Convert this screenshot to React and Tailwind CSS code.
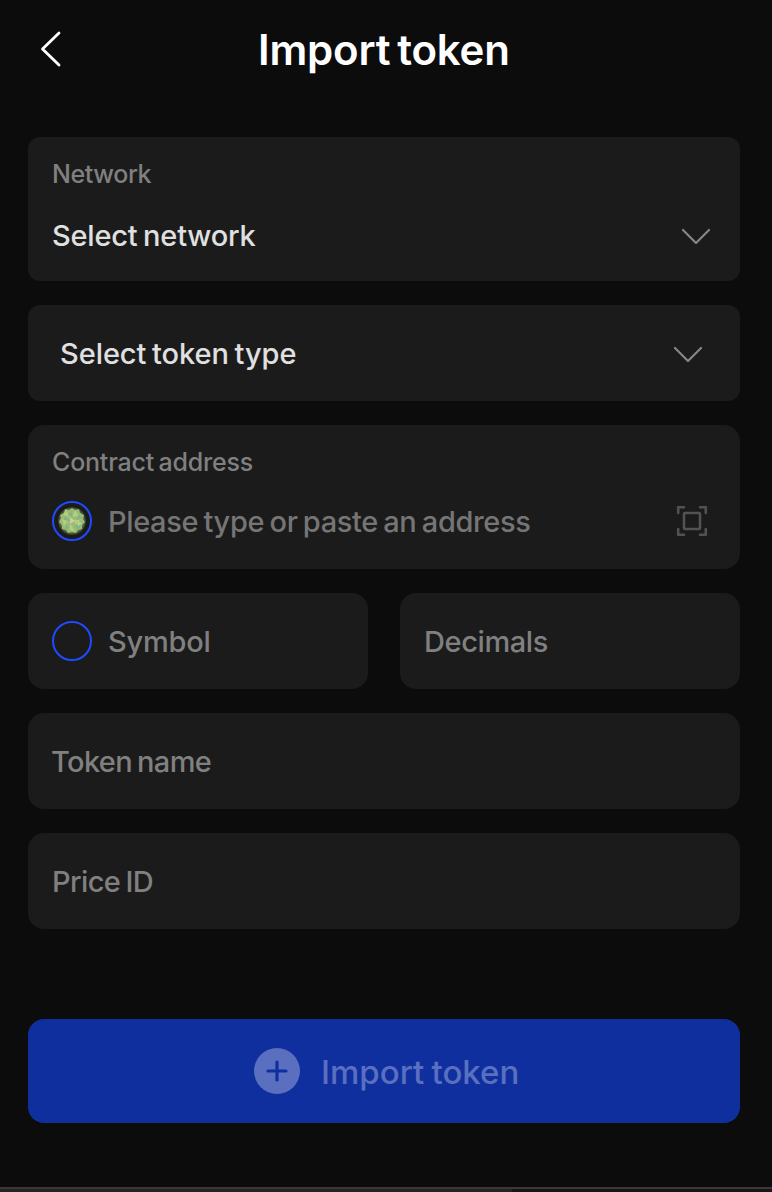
import React from "react";

const Chevron = () => (
  <svg width="32" height="20" viewBox="0 0 32 20" fill="none" stroke="#868686" strokeWidth="2.2" strokeLinecap="round" strokeLinejoin="round">
    <path d="M3 3 16 16 29 3" />
  </svg>
);

const ScanIcon = () => (
  <svg width="32" height="32" viewBox="0 0 32 32" fill="none" stroke="#525252" strokeWidth="2.6" strokeLinecap="round" strokeLinejoin="round">
    <path d="M2.200 8V2.200H8M24 2.200h5.800V8M29.800 24v5.800H24M8 29.800H2.200V24" />
    <rect x="8" y="8" width="16" height="16" rx="1" />
  </svg>
);

const TokenAvatar = () => (
  <svg width="30" height="30" viewBox="0 0 30 30">
    <defs>
      <radialGradient id="tokenGlow">
        <stop offset="0.75" stopColor="#71834d" />
        <stop offset="1" stopColor="#303922" />
      </radialGradient>
    </defs>
    <circle cx="15" cy="15" r="14" fill="url(#tokenGlow)" />
    <path fill="#98bd7b" d="m15 2 3 2 4-1 1 4 4 2-1 4 2 3-3 3v4l-4 1-2 3-4-1-4 1-2-3-4-1v-4l-3-3 2-4-1-3 4-2 1-4 4 1Z" />
    <path fill="#b9cc77" d="m9 4 4 7-7-2ZM18 4l4 6-7 1ZM24 13l-5 6-2-5ZM5 13l6 2-4 5ZM14 18l4 8-7-3Z" />
    <path fill="#7fb486" d="m14 5 2 6-5-2ZM22 8l3 5-6 1ZM8 10l5 5-6-1ZM18 19l6 1-4 4ZM9 19l4 3-5 2Z" />
    <path fill="#c7d392" d="m13 11 5 4-5 3ZM21 16l4 1-4 3Z" />
  </svg>
);

const Field = ({ children }) => (
  <div className="flex h-24 items-center rounded-2xl bg-[#1b1b1b] px-6 pt-0.5 text-[29px] font-medium text-[#808080]">
    {children}
  </div>
);

export default function App() {
  return (
    <div className="flex h-[1192px] w-[772px] flex-col bg-[#0c0c0c] font-['Inter','Open_Sans',sans-serif]">
      <header className="flex h-[100px] items-center pl-[37px]">
        <svg className="-mt-[3px]" width="28" height="40" viewBox="0 0 28 40" fill="none" stroke="#fff" strokeWidth="2.8" strokeLinecap="round" strokeLinejoin="round">
          <path d="M22 4 5.500 20 22 36" />
        </svg>
        <h1 className="ml-[193px] whitespace-nowrap text-[42px] font-semibold leading-[50px] tracking-[-0.2px] [word-spacing:-3.5px] text-white">Import token</h1>
      </header>
      <main className="flex flex-col gap-6 pl-7 pr-8 pt-[37px]">
        <section className="flex h-36 flex-col rounded-xl bg-[#1b1b1b] px-6 pt-[21px]">
          <div className="text-[25px] font-medium leading-8 tracking-[-0.4px] text-[#808080]">Network</div>
          <div className="mt-[26px] flex items-center justify-between pr-1">
            <span className="text-[29px] font-medium leading-10 tracking-[-0.2px] [word-spacing:-2px] text-[#e0e0e0]">Select network</span>
            <div className="pt-px"><Chevron /></div>
          </div>
        </section>
        <section className="flex h-24 items-center justify-between rounded-xl bg-[#1b1b1b] pl-8 pr-9 pt-0.5">
          <span className="text-[29px] font-medium leading-10 tracking-[-0.06px] [word-spacing:-2px] text-[#e0e0e0]">Select token type</span>
          <div className="pt-px"><Chevron /></div>
        </section>
        <section className="flex h-36 flex-col rounded-2xl bg-[#1b1b1b] px-6 pt-[21px]">
          <div className="text-[25px] font-medium leading-8 tracking-[-0.2px] [word-spacing:-2px] text-[#808080]">Contract address</div>
          <div className="mt-[23px] flex h-10 items-center">
            <div className="flex size-10 items-center justify-center rounded-full border-2 border-[#1f4bff]">
              <TokenAvatar />
            </div>
            <span className="ml-4 whitespace-nowrap pt-0.5 text-[29px] font-medium leading-10 tracking-[-0.37px] [word-spacing:-2px] text-[#757575]">Please type or paste an address</span>
            <div className="ml-auto mr-2"><ScanIcon /></div>
          </div>
        </section>
        <div className="grid grid-cols-2 gap-8">
          <Field>
            <div className="-mt-0.5 mr-4 size-10 rounded-full border-2 border-[#1f4bff]" />
            <span className="tracking-[-0.2px]">Symbol</span>
          </Field>
          <Field><span className="tracking-[-0.4px]">Decimals</span></Field>
        </div>
        <Field><span className="-ml-px tracking-[-0.65px] [word-spacing:-2px]">Token name</span></Field>
        <Field><span className="tracking-[-0.6px] [word-spacing:-2px]">Price ID</span></Field>
        <button className="mt-[66px] flex h-[104px] items-center rounded-2xl bg-[#102f9e] pl-[226px] text-[33px] font-medium text-[#5a6fc0]">
          <svg width="46" height="46" viewBox="0 0 46 46">
            <circle cx="23" cy="23" r="23" fill="#5a6fc0" />
            <path d="M23 14v18M14 23h18" fill="none" stroke="#102f9e" strokeWidth="3.2" strokeLinecap="round" />
          </svg>
          <span className="ml-[21px] whitespace-nowrap pt-[3px] [word-spacing:-1.5px]">Import token</span>
        </button>
      </main>
      <footer className="mt-auto flex h-[5px] border-t-2 border-[#393939]">
        <div className="w-[512px] bg-[#242425]" />
        <div className="flex-1 bg-[#171717]" />
      </footer>
    </div>
  );
}
